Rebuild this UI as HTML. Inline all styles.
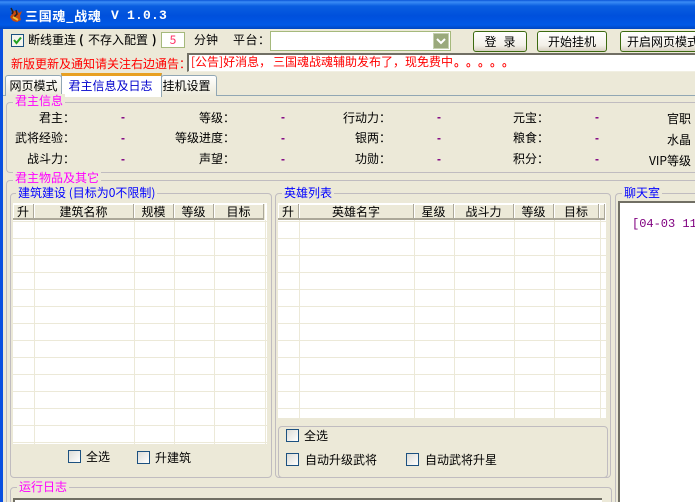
<!DOCTYPE html>
<html><head><meta charset="utf-8"><style>
*{margin:0;padding:0;box-sizing:border-box}
html,body{width:695px;height:502px;overflow:hidden;background:#ece9d8}
body{position:relative;font:12px/14px "WenQuanYi Zen Hei","Noto Sans CJK SC","Liberation Sans",sans-serif;color:#000}
#root{position:absolute;left:0;top:0;width:695px;height:502px;overflow:hidden;background:#ece9d8}
#root div{position:absolute;white-space:nowrap}
.t{height:14px}
.gb{border:1px solid #c0bcc0;border-radius:4px}
.nr{border-right:0;border-top-right-radius:0;border-bottom-right-radius:0}
.nb{border-bottom:0;border-bottom-left-radius:0;border-bottom-right-radius:0}
.lbl{background:#ece9d8;padding:0 2px;height:14px}
.m{color:#f0f}.b{color:#00f}
.cb{width:13px;height:13px;border:1px solid #1c5180;background:linear-gradient(135deg,#dcdcd7,#fff)}
.btn{height:21px;border:1px solid #3c6a10;border-radius:3px;background:linear-gradient(#fff,#f3f0e8 70%,#d8d0c0);text-align:center;line-height:19px;overflow:hidden}
.v{color:#800080;font:bold 12px/14px "Liberation Sans",sans-serif;height:14px}
.r{text-align:right;width:80px}
.tab{border:1px solid #91a7b4;border-bottom:0;border-radius:3px 3px 0 0;background:linear-gradient(#fff,#ece9d8);text-align:center;line-height:20px}
.hc{height:16px;background:#ece9d8;border-right:1px solid #aca899;border-bottom:2px solid #aca899;box-shadow:inset 1px 1px 0 #fff;text-align:center;line-height:15px}
.tb{background-color:#fff;background-image:repeating-linear-gradient(#fff 0,#fff 16px,#ece9d8 16px,#ece9d8 17px);background-position:0 2px;overflow:hidden}
.cl{width:1px;top:220px;background:#ece9d8}
</style></head><body><div id="root">
<!-- title -->
<div style="left:0;top:0;width:695px;height:29px;background:linear-gradient(#0a55d8 0,#3a8cf5 2px,#0a5ee0 6px,#0050dc 16px,#0058e6 25px,#0046c0 29px)"></div>
<svg style="position:absolute;left:8px;top:7px" width="16" height="16"><path d="M3 1l3 3 3-1 2 3 3-2-2 5 1 4-4 2-4-1-3-4 2-3z" fill="#c84a10"/><path d="M3 1l2 4-1 2M8 3l1 4-3 3" stroke="#222" stroke-width="1.5" fill="none"/><path d="M5 10l5 3" stroke="#f0c030" stroke-width="2"/></svg>
<div class="t" style="left:25px;top:9px;color:#fff;font:bold 13px/14px 'WenQuanYi Zen Hei','Noto Sans CJK SC',sans-serif;letter-spacing:.7px">三国魂_战魂</div>
<div class="t" style="left:111px;top:9px;color:#fff;font:bold 13px/14px 'Liberation Mono',monospace;letter-spacing:.2px;white-space:pre">V 1.0.3</div>
<div style="left:0;top:29px;width:3px;height:473px;background:#0a50e0"></div>
<!-- row 1 -->
<div class="cb" style="left:11px;top:34px;background:#f4f4ee"></div>
<svg style="position:absolute;left:11px;top:34px" width="13" height="13"><path d="M3 6l2.5 3L10 3.5" stroke="#21a121" stroke-width="2" fill="none"/></svg>
<div class="t" style="left:28px;top:33px">断线重连</div>
<div class="t" style="left:79px;top:33px;font-weight:bold">(</div>
<div class="t" style="left:88px;top:33px">不存入配置</div>
<div class="t" style="left:152px;top:33px;font-weight:bold">)</div>
<div style="left:161px;top:32px;width:24px;height:16px;border:1px solid #a5b97c;background:#fff;color:#f36;text-align:center;line-height:14px">5</div>
<div class="t" style="left:194px;top:33px">分钟</div>
<div class="t" style="left:233px;top:33px;letter-spacing:.5px">平台：</div>
<div style="left:270px;top:31px;width:181px;height:20px;border:1px solid #a5b97c;background:#fff"></div>
<div style="left:433px;top:33px;width:16px;height:16px;background:#9aa97c;border:1px solid #c5d0b0"></div>
<svg style="position:absolute;left:433px;top:33px" width="16" height="16"><path d="M4 6l4 4 4-4" stroke="#fff" stroke-width="2" fill="none"/></svg>
<div class="btn" style="left:473px;top:31px;width:54px"><span style="letter-spacing:7px;margin-right:-7px">登录</span></div>
<div class="btn" style="left:537px;top:31px;width:70px">开始挂机</div>
<div class="btn" style="left:620px;top:31px;width:75px;text-align:left;padding-left:6px;border-right:0;border-radius:3px 0 0 3px">开启网页模式</div>
<!-- row 2 -->
<div class="t" style="left:11px;top:57px;color:#f00">新版更新及通知请关注右边通告：</div>
<div style="left:187px;top:53px;width:508px;height:19px;background:#fff;border-top:2px solid #716f64;border-left:2px solid #716f64;border-bottom:1px solid #f1efe2"></div>
<div class="t" style="left:191px;top:55px;color:#f00">[公告]好消息，</div>
<div class="t" style="left:273px;top:55px;color:#f00">三国魂战魂辅助发布了，</div>
<div class="t" style="left:405px;top:55px;color:#f00">现免费中</div>
<div class="t" style="left:454px;top:55px;color:#f00;letter-spacing:6px;font-weight:bold">。。。。。</div>
<!-- tabs -->
<div style="left:3px;top:95px;width:692px;height:1px;background:#91a7b4"></div>
<div class="tab" style="left:5px;top:75px;width:57px;height:21px">网页模式</div>
<div class="tab" style="left:161px;top:75px;width:56px;height:21px;padding-right:5px">挂机设置</div>
<div style="left:61px;top:73px;width:101px;height:24px;background:#fff;border:1px solid #91a7b4;border-top:3px solid #e8a020;border-bottom:0;text-align:center;line-height:20px;color:#00c;padding-right:2px">君主信息及日志</div>
<!-- info group -->
<div class="gb nr" style="left:6px;top:102px;width:689px;height:71px"></div>
<div class="lbl m" style="left:13px;top:94px">君主信息</div>
<div class="t r" style="left:-5px;top:111px">君主：</div><div class="t v" style="left:121px;top:110px">-</div>
<div class="t r" style="left:155px;top:111px">等级：</div><div class="t v" style="left:281px;top:110px">-</div>
<div class="t r" style="left:311px;top:111px">行动力：</div><div class="t v" style="left:437px;top:110px">-</div>
<div class="t r" style="left:469px;top:111px">元宝：</div><div class="t v" style="left:595px;top:110px">-</div>
<div class="t r" style="left:611px;top:112px">官职</div>
<div class="t r" style="left:-5px;top:131px">武将经验：</div><div class="t v" style="left:121px;top:131px">-</div>
<div class="t r" style="left:155px;top:131px">等级进度：</div><div class="t v" style="left:281px;top:131px">-</div>
<div class="t r" style="left:311px;top:131px">银两：</div><div class="t v" style="left:437px;top:131px">-</div>
<div class="t r" style="left:469px;top:131px">粮食：</div><div class="t v" style="left:595px;top:131px">-</div>
<div class="t r" style="left:611px;top:133px">水晶</div>
<div class="t r" style="left:-5px;top:152px">战斗力：</div><div class="t v" style="left:121px;top:152px">-</div>
<div class="t r" style="left:155px;top:152px">声望：</div><div class="t v" style="left:281px;top:152px">-</div>
<div class="t r" style="left:311px;top:152px">功勋：</div><div class="t v" style="left:437px;top:152px">-</div>
<div class="t r" style="left:469px;top:152px">积分：</div><div class="t v" style="left:595px;top:152px">-</div>
<div class="t r" style="left:611px;top:154px">VIP等级</div>
<!-- items group -->
<div class="gb nr nb" style="left:6px;top:180px;width:689px;height:322px"></div>
<div class="lbl m" style="left:13px;top:171px">君主物品及其它</div>
<!-- build group -->
<div class="gb" style="left:10px;top:193px;width:262px;height:285px"></div>
<div class="lbl b" style="left:16px;top:186px">建筑建设 (目标为0不限制)</div>
<div class="tb" style="left:13px;top:203px;width:254px;height:241px"></div>
<div style="left:13px;top:203px;width:252px;height:17px;background:#ece9d8;border-top:1px solid #fff"></div>
<div class="hc" style="left:13px;top:204px;width:21px">升</div>
<div class="hc" style="left:34px;top:204px;width:100px">建筑名称</div>
<div class="hc" style="left:134px;top:204px;width:40px">规模</div>
<div class="hc" style="left:174px;top:204px;width:40px">等级</div>
<div class="hc" style="left:214px;top:204px;width:50px">目标</div>
<div class="cl" style="left:34px;height:224px"></div>
<div class="cl" style="left:134px;height:224px"></div>
<div class="cl" style="left:174px;height:224px"></div>
<div class="cl" style="left:214px;height:224px"></div>
<div class="cl" style="left:265px;height:224px"></div>
<div class="cb" style="left:68px;top:450px"></div><div class="t" style="left:86px;top:450px">全选</div>
<div class="cb" style="left:137px;top:451px"></div><div class="t" style="left:155px;top:451px">升建筑</div>
<!-- hero group -->
<div class="gb" style="left:275px;top:193px;width:336px;height:285px"></div>
<div class="lbl b" style="left:282px;top:186px">英雄列表</div>
<div class="tb" style="left:278px;top:203px;width:328px;height:215px"></div>
<div style="left:278px;top:203px;width:327px;height:17px;background:#ece9d8;border-top:1px solid #fff"></div>
<div class="hc" style="left:278px;top:204px;width:21px">升</div>
<div class="hc" style="left:299px;top:204px;width:115px">英雄名字</div>
<div class="hc" style="left:414px;top:204px;width:40px">星级</div>
<div class="hc" style="left:454px;top:204px;width:60px">战斗力</div>
<div class="hc" style="left:514px;top:204px;width:40px">等级</div>
<div class="hc" style="left:554px;top:204px;width:45px">目标</div>
<div class="hc" style="left:599px;top:204px;width:6px"></div>
<div class="cl" style="left:299px;height:198px"></div>
<div class="cl" style="left:414px;height:198px"></div>
<div class="cl" style="left:454px;height:198px"></div>
<div class="cl" style="left:514px;height:198px"></div>
<div class="cl" style="left:554px;height:198px"></div>
<div class="cl" style="left:600px;height:198px"></div>
<div class="gb" style="left:278px;top:426px;width:330px;height:52px"></div>
<div class="cb" style="left:286px;top:429px"></div><div class="t" style="left:304px;top:429px">全选</div>
<div class="cb" style="left:286px;top:453px"></div><div class="t" style="left:305px;top:453px">自动升级武将</div>
<div class="cb" style="left:406px;top:453px"></div><div class="t" style="left:425px;top:453px">自动武将升星</div>
<!-- chat -->
<div class="gb nr nb" style="left:615px;top:193px;width:80px;height:309px"></div>
<div class="lbl b" style="left:622px;top:186px">聊天室</div>
<div style="left:618px;top:201px;width:77px;height:301px;background:#fff;border-top:2px solid #716f64;border-left:2px solid #716f64"></div>
<div class="t" style="left:632px;top:217px;color:#800080;font:12px/14px 'Liberation Mono',monospace">[04-03 11</div>
<!-- log -->
<div class="gb nb" style="left:10px;top:487px;width:602px;height:15px"></div>
<div class="lbl m" style="left:17px;top:480px">运行日志</div>
<div style="left:13px;top:498px;width:589px;height:4px;background:#fff;border-top:2px solid #716f64;border-left:2px solid #716f64"></div>
</div></body></html>
